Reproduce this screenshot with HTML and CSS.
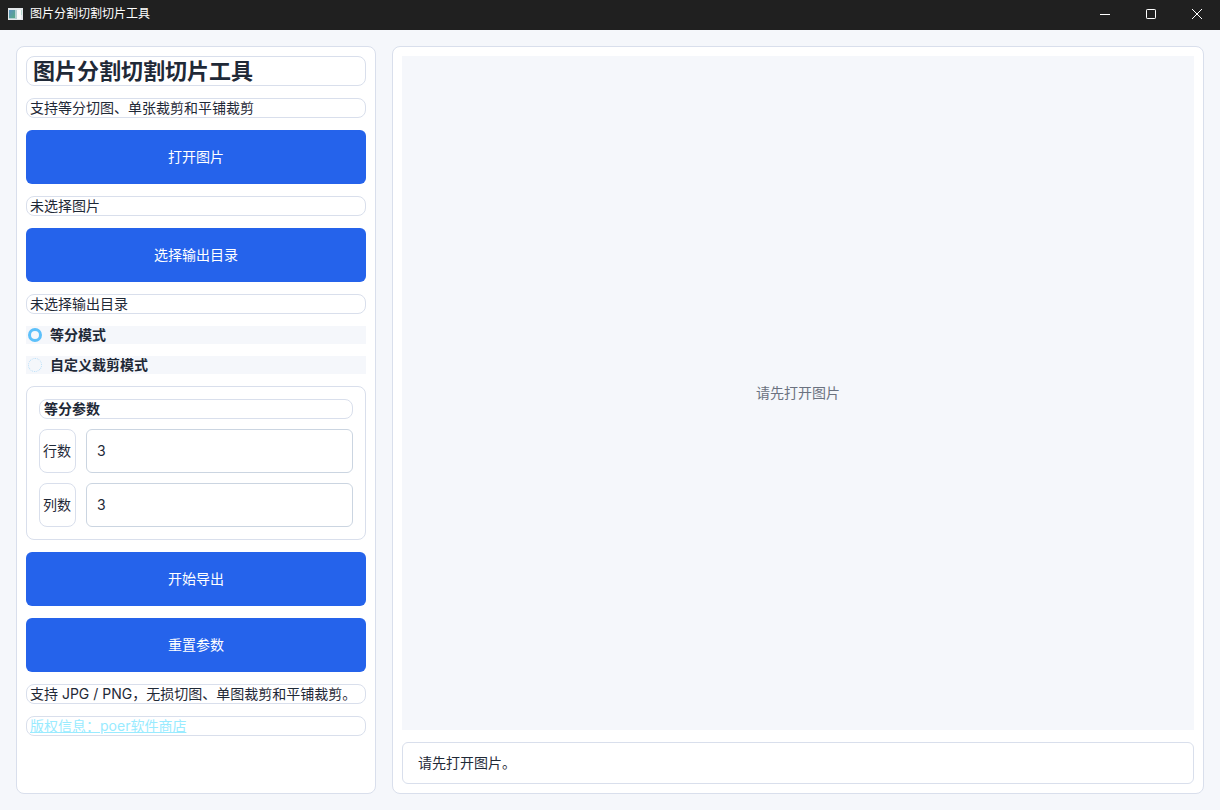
FILE: index.html
```
<!DOCTYPE html>
<html lang="zh-CN">
<head>
    <meta charset="utf-8">
    <meta name="viewport" content="width=device-width, initial-scale=1">
    <title>图片分割切割切片工具</title>
    <link rel="stylesheet" href="styles.css">
</head>
<body>
<header class="titlebar">
    <svg class="app-icon" width="15" height="12" viewBox="0 0 15 12">
        <defs>
            <linearGradient id="pic" x1="0" y1="0" x2="1" y2="1">
                <stop offset="0" stop-color="#5a8fc0"/>
                <stop offset="1" stop-color="#58ab85"/>
            </linearGradient>
        </defs>
        <rect width="15" height="12" fill="#e3e7ea"/>
        <rect x="1" y="2" width="8" height="9" fill="#b4d0d2"/>
        <rect x="1" y="2" width="6" height="8" fill="url(#pic)"/>
        <rect x="9" y="2" width="4" height="9" fill="#f8f9f9"/>
        <rect x="13" y="2" width="1" height="5" fill="#b4d8cc"/>
    </svg>
    <span class="titlebar-text">图片分割切割切片工具</span>
    <div class="window-buttons">
        <button type="button" aria-label="最小化">
            <svg width="10" height="10" viewBox="0 0 10 10"><path d="M0 5.5h10"/></svg>
        </button>
        <button type="button" aria-label="最大化">
            <svg width="10" height="10" viewBox="0 0 10 10"><rect x="0.5" y="0.5" width="9" height="9" rx="0.7"/></svg>
        </button>
        <button type="button" aria-label="关闭">
            <svg width="10" height="10" viewBox="0 0 10 10"><path d="M0 0l10 10M10 0L0 10"/></svg>
        </button>
    </div>
</header>
<main class="workspace">
    <form class="panel sidebar">
        <h1 class="title">图片分割切割切片工具</h1>
        <p class="label">支持等分切图、单张裁剪和平铺裁剪</p>
        <button type="button" class="btn">打开图片</button>
        <p class="label">未选择图片</p>
        <button type="button" class="btn">选择输出目录</button>
        <p class="label">未选择输出目录</p>
        <label class="mode"><input type="radio" name="mode" value="grid" checked>等分模式</label>
        <label class="mode"><input type="radio" name="mode" value="custom">自定义裁剪模式</label>
        <section class="group">
            <h2 class="label group-title">等分参数</h2>
            <div class="field">
                <label for="rows">行数</label>
                <input type="text" id="rows" value="3">
            </div>
            <div class="field">
                <label for="cols">列数</label>
                <input type="text" id="cols" value="3">
            </div>
        </section>
        <button type="button" class="btn">开始导出</button>
        <button type="reset" class="btn">重置参数</button>
        <p class="label">支持 JPG / PNG，无损切图、单图裁剪和平铺裁剪。</p>
        <p class="label"><a href="#">版权信息：poer软件商店</a></p>
    </form>
    <section class="panel preview">
        <div class="canvas">请先打开图片</div>
        <div class="status">请先打开图片。</div>
    </section>
</main>
</body>
</html>
```
FILE: styles.css
```
* {
    box-sizing: border-box;
    margin: 0;
    padding: 0;
}
body {
    display: flex;
    flex-direction: column;
    min-height: 100vh;
    background: #f5f7fb;
    color: #1f2937;
    font: 14px/18px Inter, "Noto Sans CJK SC", sans-serif;
}
button, input {
    font: inherit;
    color: inherit;
}

/* 标题栏 */
.titlebar {
    display: flex;
    align-items: center;
    height: 30px;
    padding-left: 8px;
    background: #202020;
    color: #fff;
}
.titlebar-text {
    flex: 1;
    margin-left: 7px;
    font-size: 12px;
    padding-bottom: 2px;
}
.app-icon {
    display: block;
    margin-bottom: 2px;
}
.window-buttons {
    display: flex;
}
.window-buttons button {
    display: flex;
    align-items: center;
    justify-content: center;
    width: 46px;
    height: 28px;
    margin-bottom: 2px;
    border: 0;
    background: none;
}
.window-buttons svg {
    fill: none;
    stroke: #fff;
}

/* 主体布局 */
.workspace {
    flex: 1;
    display: flex;
    gap: 16px;
    padding: 16px;
}
.panel {
    display: flex;
    flex-direction: column;
    gap: 12px;
    padding: 9px;
    border: 1px solid #d9dfec;
    border-radius: 8px;
    background: #fff;
}
.sidebar {
    flex: 0 0 360px;
}
.preview {
    flex: 1;
}

/* 左侧控件 */
.title {
    padding: 0 6px;
    border: 1px solid #d9dfec;
    border-radius: 8px;
    font-size: 22px;
    line-height: 28px;
}
.label {
    padding: 0 3px;
    border: 1px solid #d9dfec;
    border-radius: 8px;
    white-space: nowrap;
}
.label a {
    color: #99ebff;
}
.btn {
    height: 54px;
    border: 0;
    border-radius: 6px;
    background: #2563eb;
    color: #fff;
}
.mode {
    display: flex;
    align-items: center;
    gap: 8px;
    padding-left: 2px;
    background: #f5f7fb;
    font-weight: bold;
}
.mode input {
    appearance: none;
    width: 14px;
    height: 14px;
    border: 1px dotted #b5def8;
    border-radius: 50%;
}
.mode input:checked {
    border: 3px solid #5cc0fa;
}

/* 参数分组 */
.group {
    display: flex;
    flex-direction: column;
    gap: 10px;
    padding: 12px;
    border: 1px solid #d9dfec;
    border-radius: 8px;
}
.group-title {
    padding: 0 4px;
    font-size: 14px;
}
.field {
    display: flex;
    gap: 10px;
    height: 44px;
}
.field label {
    width: 37px;
    padding: 0 3px;
    border: 1px solid #d9dfec;
    border-radius: 8px;
    line-height: 42px;
    white-space: nowrap;
}
.field input {
    flex: 1;
    min-width: 0;
    padding: 0 10px;
    border: 1px solid #cbd5e1;
    border-radius: 6px;
    background: #fff;
}

/* 右侧预览 */
.canvas {
    flex: 1;
    display: flex;
    align-items: center;
    justify-content: center;
    background: #f5f7fb;
    color: #6b7280;
}
.status {
    padding: 11px 15px;
    border: 1px solid #d9dfec;
    border-radius: 6px;
}
```
